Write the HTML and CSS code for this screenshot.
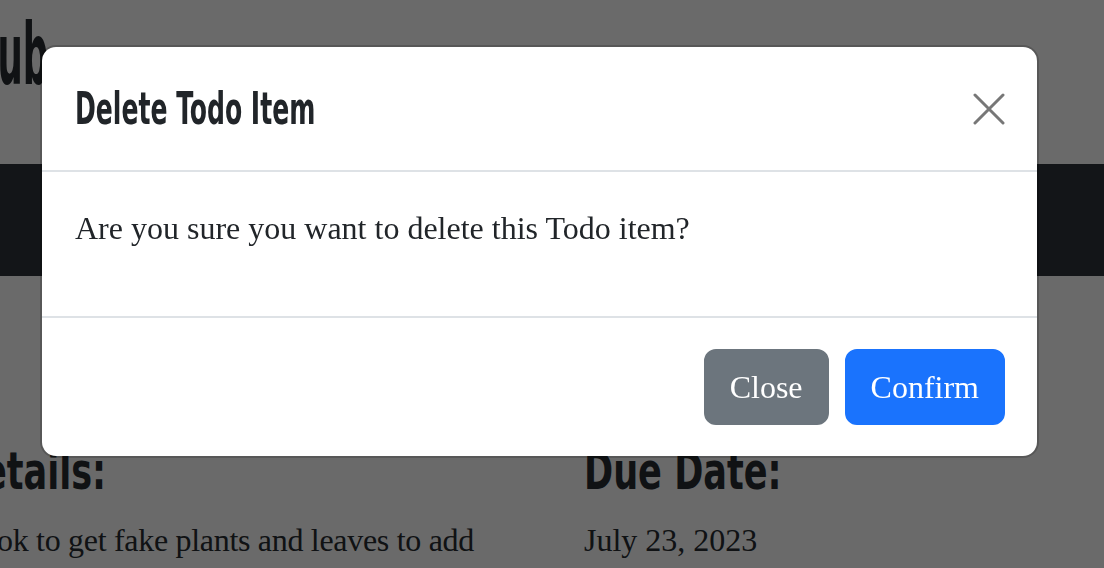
FILE: index.html
```html
<!DOCTYPE html>
<html lang="en">
<head>
<meta charset="utf-8">
<title>Todo Hub</title>
<link rel="stylesheet" href="styles.css">
</head>
<body>
<div class="page">
  <header class="brand">
    <div class="brand-clip"><h1 class="brand-title">Todo Hub</h1></div>
  </header>
  <nav class="navbar"></nav>
  <main class="details">
    <section class="col">
      <div class="clip clip-heading"><h2 class="col-heading col-heading-end">Details:</h2></div>
      <div class="clip clip-text"><p class="col-text col-text-tight">Look to get fake plants and leaves to add</p></div>
    </section>
    <section class="col">
      <h2 class="col-heading col-heading-start">Due Date:</h2>
      <p class="col-text">July 23, 2023</p>
    </section>
  </main>
</div>

<div class="backdrop"></div>

<div class="modal">
  <div class="modal-dialog">
    <div class="modal-content">
      <div class="modal-header">
        <h5 class="modal-title">Delete Todo Item</h5>
        <button class="btn-close" type="button" aria-label="Close">
          <svg viewBox="0 0 16 16" width="32" height="32" aria-hidden="true">
            <path d="M1 1 L15 15 M15 1 L1 15" stroke="#777" stroke-width="1.5" stroke-linecap="round" fill="none"/>
          </svg>
        </button>
      </div>
      <div class="modal-body">
        <p class="modal-text">Are you sure you want to delete this Todo item?</p>
      </div>
      <div class="modal-footer">
        <button class="btn btn-secondary" type="button">Close</button>
        <button class="btn btn-primary" type="button">Confirm</button>
      </div>
    </div>
  </div>
</div>
</body>
</html>
```

FILE: styles.css
```css
html, body {
  margin: 0;
  padding: 0;
}

body {
  background: #d4d4d4;
  color: #212529;
  font-family: "Liberation Serif", "DejaVu Serif", serif;
  overflow: hidden;
  width: 1104px;
  height: 568px;
}

.page {
  display: flex;
  flex-direction: column;
}

.brand {
  height: 164px;
}

.brand-clip {
  width: 48px;
  display: flex;
  justify-content: flex-end;
}

.brand-title {
  margin: 0;
  padding-top: 4px;
  white-space: nowrap;
  font-family: "DejaVu Sans Condensed", "DejaVu Sans", sans-serif;
  font-weight: 700;
  font-size: 86px;
  line-height: 100px;
  color: #212529;
  transform: scaleX(0.46);
  transform-origin: right center;
}

.navbar {
  height: 112px;
  background: #262b30;
}

.details {
  display: grid;
  grid-template-columns: 584px 1fr;
  padding-top: 164px;
}

.col {
  display: flex;
  flex-direction: column;
}

.clip {
  display: flex;
  justify-content: flex-end;
}

.clip-heading {
  width: 106px;
}

.clip-text {
  width: 474px;
}

.col-heading {
  margin: 0;
  white-space: nowrap;
  font-family: "DejaVu Sans Condensed", "DejaVu Sans", sans-serif;
  font-weight: 700;
  font-size: 52px;
  line-height: 62px;
  color: #212529;
  transform: scaleX(0.75);
}

.col-heading-end {
  transform-origin: right center;
}

.col-heading-start {
  transform-origin: left center;
}

.col-text {
  margin: 14px 0 0;
  white-space: nowrap;
  font-size: 32px;
  line-height: 48px;
  color: #212529;
}

.col-text-tight {
  letter-spacing: -0.3px;
}

.backdrop {
  position: fixed;
  inset: 0;
  background: rgba(0, 0, 0, 0.5);
}

.modal {
  position: fixed;
  inset: 0;
  padding-top: 45px;
}

.modal-dialog {
  width: 999px;
  margin-left: 40px;
}

.modal-content {
  box-sizing: border-box;
  background: #fff;
  background-clip: padding-box;
  border: 2px solid rgba(0, 0, 0, 0.175);
  border-radius: 16px;
  display: flex;
  flex-direction: column;
}

.modal-header {
  display: flex;
  align-items: center;
  padding: 31.5px 32px 31.5px 33px;
  border-bottom: 2px solid #dee2e6;
}

.modal-title {
  margin: 0;
  font-family: "DejaVu Sans Condensed", "DejaVu Sans", sans-serif;
  font-weight: 700;
  font-size: 45px;
  line-height: 60px;
  color: #212529;
  transform: scaleX(0.62);
  transform-origin: left center;
}

.btn-close {
  box-sizing: content-box;
  width: 32px;
  height: 32px;
  padding: 8px;
  margin: -8px -8px -8px auto;
  border: 0;
  background: transparent;
  display: flex;
  align-items: center;
  justify-content: center;
}

.modal-body {
  padding: 32px 32px 32px 33px;
}

.modal-text {
  margin: 0 0 32px;
  font-size: 32px;
  line-height: 48px;
  color: #212529;
}

.modal-footer {
  display: flex;
  justify-content: flex-end;
  align-items: center;
  padding: 23px 24px;
  border-top: 2px solid #dee2e6;
}

.btn {
  margin: 8px;
  padding: 12px 24px;
  border: 2px solid transparent;
  border-radius: 12px;
  font-family: "Liberation Serif", "DejaVu Serif", serif;
  font-size: 32px;
  line-height: 48px;
  color: #fff;
}

.btn-secondary {
  background: #6c757d;
  border-color: #6c757d;
}

.btn-primary {
  background: #1a73fd;
  border-color: #1a73fd;
}
```
